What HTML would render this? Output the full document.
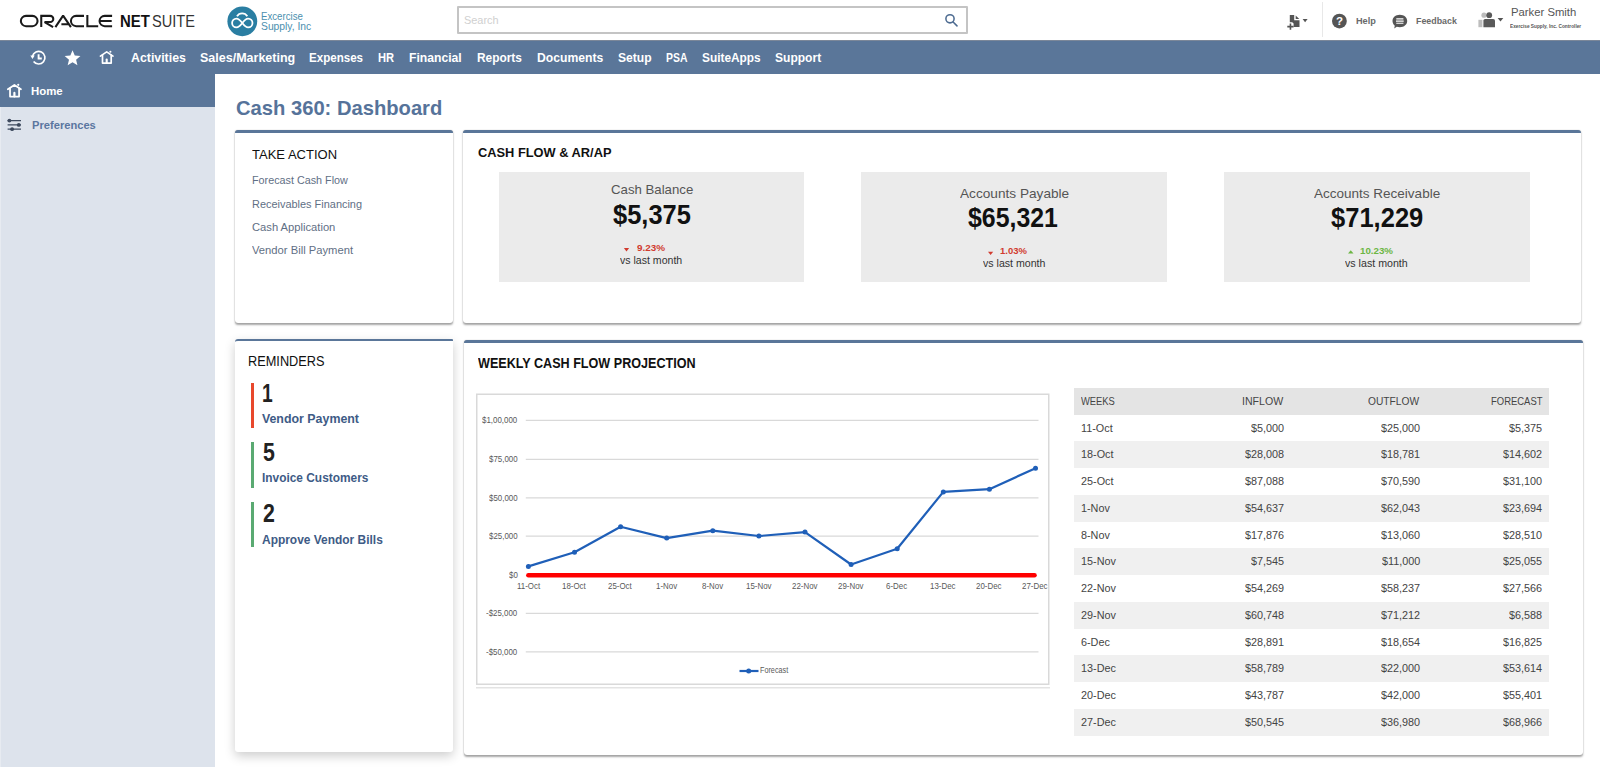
<!DOCTYPE html>
<html><head><meta charset="utf-8"><title>Cash 360: Dashboard</title><style>
*{margin:0;padding:0;box-sizing:border-box}
html,body{width:1600px;height:767px;overflow:hidden;background:#fff;font-family:"Liberation Sans",sans-serif}
.abs{position:absolute}
.t{position:absolute;white-space:nowrap;line-height:1;transform-origin:0 0}
.card{position:absolute;background:#fff;border-top:3px solid #5a7699;border-radius:3px 3px 3px 3px}
</style></head><body>
<div class="abs" style="left:0;top:40px;width:1600px;height:34px;background:#5a7699;border-top:1px solid #7b8799"></div>
<div class="abs" style="left:0;top:74px;width:215px;height:693px;background:#dde3ec"></div>
<div class="abs" style="left:0;top:74px;width:215px;height:33px;background:#5a7699"></div>
<div class="abs" style="left:457px;top:6px;width:511px;height:27.5px;border:2px solid #c4c4c4;border-radius:1px;background:#fff"></div>
<div class="abs" style="left:1321.5px;top:2px;width:1px;height:35px;background:#e8e8e8"></div>
<div class="card" style="left:235px;top:129.5px;width:218px;height:193.2px;box-shadow:0 1.5px 2px rgba(0,0,0,.35),0 0 1px rgba(0,0,0,.25)"></div>
<div class="card" style="left:463.3px;top:129.5px;width:1118px;height:193.2px;box-shadow:0 1.5px 2px rgba(0,0,0,.35),0 0 1px rgba(0,0,0,.25)"></div>
<div class="card" style="left:235px;top:338.7px;width:218px;height:413.1px;border-top-width:2.5px;border-top-right-radius:1px;box-shadow:0 4px 11px rgba(0,0,0,.2)"></div>
<div class="card" style="left:464px;top:340.4px;width:1119px;height:414.2px;box-shadow:0 1.5px 2px rgba(0,0,0,.35),0 0 1px rgba(0,0,0,.25)"></div>
<div class="abs" style="left:498.6px;top:172.2px;width:305.8px;height:110.2px;background:#ebebeb"></div>
<div class="abs" style="left:861.0px;top:172.2px;width:305.8px;height:110.2px;background:#ebebeb"></div>
<div class="abs" style="left:1223.8px;top:172.2px;width:305.8px;height:110.2px;background:#ebebeb"></div>
<div class="abs" style="left:250.7px;top:383.0px;width:3.8px;height:45.4px;background:#e8482c"></div>
<div class="abs" style="left:250.7px;top:442.4px;width:3.8px;height:45.9px;background:#5aaa72"></div>
<div class="abs" style="left:250.7px;top:502.0px;width:3.8px;height:45.1px;background:#5aaa72"></div>
<div class="abs" style="left:0;top:107px;width:1px;height:660px;background:#e7ebf1"></div>
<div class="abs" style="left:1074.2px;top:388.2px;width:475px;height:26.4px;background:#e4e4e4"></div>
<div class="abs" style="left:1074.2px;top:441.36px;width:475px;height:26.76px;background:#f0f0f0"></div>
<div class="abs" style="left:1074.2px;top:494.88px;width:475px;height:26.76px;background:#f0f0f0"></div>
<div class="abs" style="left:1074.2px;top:548.40px;width:475px;height:26.76px;background:#f0f0f0"></div>
<div class="abs" style="left:1074.2px;top:601.92px;width:475px;height:26.76px;background:#f0f0f0"></div>
<div class="abs" style="left:1074.2px;top:655.44px;width:475px;height:26.76px;background:#f0f0f0"></div>
<div class="abs" style="left:1074.2px;top:708.96px;width:475px;height:26.76px;background:#f0f0f0"></div>
<svg class="abs" style="left:0;top:0" width="1600" height="767" viewBox="0 0 1600 767">
<rect x="476.75" y="394.25" width="572" height="290" fill="#fff" stroke="#d9d9d9" stroke-width="1.5"/>
<line x1="476" y1="687.75" x2="1050" y2="687.75" stroke="#e3e3e3" stroke-width="1.5"/>
<line x1="525.8" y1="420.3" x2="1038.5" y2="420.3" stroke="#d9d9d9" stroke-width="1.2"/>
<line x1="525.8" y1="459.4" x2="1038.5" y2="459.4" stroke="#d9d9d9" stroke-width="1.2"/>
<line x1="525.8" y1="497.8" x2="1038.5" y2="497.8" stroke="#d9d9d9" stroke-width="1.2"/>
<line x1="525.8" y1="536.1" x2="1038.5" y2="536.1" stroke="#d9d9d9" stroke-width="1.2"/>
<line x1="525.8" y1="613.3" x2="1038.5" y2="613.3" stroke="#d9d9d9" stroke-width="1.2"/>
<line x1="525.8" y1="651.9" x2="1038.5" y2="651.9" stroke="#d9d9d9" stroke-width="1.2"/>
<line x1="528.4" y1="575.3" x2="1034.5" y2="575.3" stroke="#ff0000" stroke-width="4.6" stroke-linecap="round"/>
<polyline points="528.4,566.4 574.5,552.2 620.6,526.7 666.7,538.1 712.8,530.7 758.9,536.0 805.0,532.1 851.1,564.5 897.2,548.7 943.3,491.9 989.4,489.2 1035.5,468.2" fill="none" stroke="#1f5fb8" stroke-width="2.2" stroke-linejoin="round"/>
<circle cx="528.4" cy="566.4" r="2.5" fill="#1f5fb8"/>
<circle cx="574.5" cy="552.2" r="2.5" fill="#1f5fb8"/>
<circle cx="620.6" cy="526.7" r="2.5" fill="#1f5fb8"/>
<circle cx="666.7" cy="538.1" r="2.5" fill="#1f5fb8"/>
<circle cx="712.8" cy="530.7" r="2.5" fill="#1f5fb8"/>
<circle cx="758.9" cy="536.0" r="2.5" fill="#1f5fb8"/>
<circle cx="805.0" cy="532.1" r="2.5" fill="#1f5fb8"/>
<circle cx="851.1" cy="564.5" r="2.5" fill="#1f5fb8"/>
<circle cx="897.2" cy="548.7" r="2.5" fill="#1f5fb8"/>
<circle cx="943.3" cy="491.9" r="2.5" fill="#1f5fb8"/>
<circle cx="989.4" cy="489.2" r="2.5" fill="#1f5fb8"/>
<circle cx="1035.5" cy="468.2" r="2.5" fill="#1f5fb8"/>
<line x1="739.5" y1="671" x2="758.5" y2="671" stroke="#1f5fb8" stroke-width="2.2"/>
<circle cx="748.7" cy="671" r="2.5" fill="#1f5fb8"/>
</svg>

<svg class="abs" style="left:0;top:0" width="1600" height="140" viewBox="0 0 1600 140">
 <g fill="none" stroke="#1a1a1a" stroke-width="2.05" stroke-miterlimit="1.5">
  <rect x="20.85" y="15.85" width="16.7" height="10.3" rx="5.15"/>
  <path d="M41.25,27.1 V15.85 H50.2 A3.1,3.1 0 0 1 50.2,22.05 H44.6 L53.1,27.1"/>
  <path d="M55.4,27.1 L63.1,15.6 L70.9,27.1 M61.4,24.3 H68.4"/>
  <path d="M84,15.85 H76.1 A5.15,5.15 0 0 0 76.1,26.15 H84"/>
  <path d="M87.35,15 V26.15 H98.2"/>
  <path d="M112.1,15.85 H104.7 A5.15,5.15 0 0 0 104.7,26.15 H112.1 M100.3,20.9 H111.7"/>
 </g>
 <!-- company logo -->
 <circle cx="242.3" cy="21.3" r="14.9" fill="#2a7ea2"/>
 <g fill="none" stroke="#fff" stroke-width="1.8">
  <path d="M242.3,23 C244.3,20.3 245.9,18.6 248.1,18.6 C250.6,18.6 252.5,20.6 252.5,23 C252.5,25.4 250.6,27.4 248.1,27.4 C245.9,27.4 244.3,25.7 242.3,23 C240.3,20.3 238.7,18.6 236.5,18.6 C234,18.6 232.1,20.6 232.1,23 C232.1,25.4 234,27.4 236.5,27.4 C238.7,27.4 240.3,25.7 242.3,23 Z"/>
  <path d="M237,16.2 A6,6 0 0 1 247.3,16.2"/>
 </g>
 <!-- search icon -->
 <g fill="none" stroke="#4d6b91" stroke-width="1.55">
  <circle cx="950" cy="18.8" r="4.1"/>
  <path d="M953.1,22 L957,25.9" stroke-linecap="round"/>
 </g>
 <!-- new record icon -->
 <g fill="#555">
  <path d="M1289.8,15 H1294.2 V20.3 H1299.5 V27.1 H1293.6 V23.4 L1292.2,22.2 H1289.8 Z"/>
  <path d="M1295.7,15.5 L1299.3,18.9 H1295.7 Z"/>
  <path d="M1302.6,19 H1307.6 L1305.1,22.2 Z"/>
 </g>
 <path d="M1287.3,26.6 H1293.6 M1290.45,23.4 V29.8" stroke="#555" stroke-width="1.6"/>
 <!-- help -->
 <circle cx="1339.4" cy="21.1" r="7.4" fill="#555"/>
 <text x="1339.4" y="25.3" font-family="Liberation Sans" font-weight="700" font-size="11.5" fill="#fff" text-anchor="middle">?</text>
 <!-- feedback -->
 <path d="M1399.8,14.8 C1404.2,14.8 1407.2,17.6 1407.2,21 C1407.2,24.4 1404.2,27.2 1399.8,27.2 C1398.8,27.2 1397.6,27 1396.8,26.7 L1394.2,28.6 L1394.8,25.7 C1393.3,24.5 1392.5,22.9 1392.5,21 C1392.5,17.6 1395.5,14.8 1399.8,14.8 Z" fill="#555"/>
 <g stroke="#fff" stroke-width="1.1"><path d="M1396.3,18.9 H1403.4 M1396,21.1 H1403.7 M1396.3,23.3 H1403.4"/></g>
 <!-- person -->
 <circle cx="1484" cy="15.2" r="2.6" fill="#bdbdbd"/>
 <rect x="1478.4" y="19.8" width="4" height="7.4" fill="#bdbdbd"/>
 <circle cx="1489.2" cy="15.2" r="2.9" fill="#5a5a5a"/>
 <path d="M1483.4,27.2 V20.6 Q1483.4,18.9 1485.2,18.9 H1493.2 Q1495,18.9 1495,20.6 V27.2 Z" fill="#5a5a5a"/>
 <path d="M1497.6,17.9 H1503.3 L1500.45,21.6 Z" fill="#555"/>
 <!-- nav history icon -->
 <g fill="none" stroke="#fff" stroke-width="1.7">
  <path d="M33.6,61.5 A6.3,6.3 0 1 0 32.5,56.3"/>
  <path d="M38.6,54.3 V58.5 H41.8" stroke-width="1.9"/>
 </g>
 <path d="M30.3,55.6 L34.7,55.6 L32.5,59.1 Z" fill="#fff"/>
 <!-- star -->
 <path d="M72.55,50.20 L74.75,55.48 L80.44,55.94 L76.10,59.65 L77.43,65.21 L72.55,62.23 L67.67,65.21 L69.00,59.65 L64.66,55.94 L70.35,55.48 Z" fill="#fff"/>
 <!-- nav home -->
 <g fill="none" stroke="#fff" stroke-width="1.7" stroke-linejoin="round" stroke-linecap="round">
  <path d="M100.4,56.1 L106.7,51.9 L113,56.1"/>
  <path d="M102.5,55.2 V63.1 H111.2 V55.2"/>
  <path d="M106.7,59.5 V63" stroke-width="2.1"/>
 </g>
 <circle cx="110.4" cy="51.8" r="1.05" fill="#fff"/>
 <!-- sidebar home -->
 <g transform="translate(-92.3,33.3) translate(106.7,57.5) scale(1.04) translate(-106.7,-57.5)"><g fill="none" stroke="#fff" stroke-width="1.7" stroke-linejoin="round" stroke-linecap="round">
  <path d="M100.4,56.1 L106.7,51.9 L113,56.1"/>
  <path d="M102.5,55.2 V63.1 H111.2 V55.2"/>
  <path d="M106.7,59.5 V63" stroke-width="2.1"/>
 </g>
 <circle cx="110.4" cy="51.8" r="1.05" fill="#fff"/></g>
 <!-- preferences -->
 <g stroke="#3d4a5e" stroke-width="1.2"><path d="M7.6,120.6 H21 M7.6,124.9 H21 M7.6,129.2 H21"/></g>
 <g fill="#3d4a5e"><circle cx="9.4" cy="120.6" r="1.9"/><circle cx="18.8" cy="124.9" r="1.9"/><circle cx="12.1" cy="129.2" r="1.9"/></g>
</svg>
<svg class="abs" style="left:0;top:0" width="1600" height="300" viewBox="0 0 1600 300">
 <path d="M623.9,248 H629.1 L626.5,251.4 Z" fill="#d13b2f"/>
 <path d="M988,251.7 H993.2 L990.6,255.1 Z" fill="#d13b2f"/>
 <path d="M1348,253.6 H1353.5 L1350.75,250.2 Z" fill="#6cb644"/>
</svg>

<div class="t" style="left:120.09px;top:13.21px;font-size:16.40px;font-weight:700;color:#111;transform:scaleX(0.9097);">NET</div>
<div class="t" style="left:151.70px;top:13.21px;font-size:16.40px;font-weight:400;color:#333;transform:scaleX(0.8896);">SUITE</div>
<div class="t" style="left:463.80px;top:14.56px;font-size:11.50px;font-weight:400;color:#d0d0d0;transform:scaleX(0.9489);">Search</div>
<div class="t" style="left:1356.00px;top:16.47px;font-size:9.60px;font-weight:700;color:#6a6a6a;transform:scaleX(0.9556);">Help</div>
<div class="t" style="left:1416.00px;top:16.47px;font-size:9.60px;font-weight:700;color:#6a6a6a;transform:scaleX(0.9238);">Feedback</div>
<div class="t" style="left:1510.60px;top:6.71px;font-size:11.80px;font-weight:400;color:#555;transform:scaleX(0.9569);">Parker Smith</div>
<div class="t" style="left:1510.00px;top:23.59px;font-size:5.80px;font-weight:700;color:#555;transform:scaleX(0.8195);">Exercise Supply, Inc. Controller</div>
<div class="t" style="left:261.00px;top:10.81px;font-size:10.50px;font-weight:400;color:#4b8fae;transform:scaleX(0.9196);">Excercise</div>
<div class="t" style="left:261.00px;top:20.51px;font-size:10.50px;font-weight:400;color:#4b8fae;transform:scaleX(0.9820);">Supply, Inc</div>
<div class="t" style="left:130.60px;top:50.67px;font-size:13.50px;font-weight:700;color:#fff;transform:scaleX(0.9140);">Activities</div>
<div class="t" style="left:199.70px;top:50.67px;font-size:13.50px;font-weight:700;color:#fff;transform:scaleX(0.9264);">Sales/Marketing</div>
<div class="t" style="left:309.40px;top:50.67px;font-size:13.50px;font-weight:700;color:#fff;transform:scaleX(0.8572);">Expenses</div>
<div class="t" style="left:377.70px;top:50.67px;font-size:13.50px;font-weight:700;color:#fff;transform:scaleX(0.8253);">HR</div>
<div class="t" style="left:409.20px;top:50.67px;font-size:13.50px;font-weight:700;color:#fff;transform:scaleX(0.9002);">Financial</div>
<div class="t" style="left:476.80px;top:50.67px;font-size:13.50px;font-weight:700;color:#fff;transform:scaleX(0.8812);">Reports</div>
<div class="t" style="left:536.60px;top:50.67px;font-size:13.50px;font-weight:700;color:#fff;transform:scaleX(0.9013);">Documents</div>
<div class="t" style="left:617.60px;top:50.67px;font-size:13.50px;font-weight:700;color:#fff;transform:scaleX(0.8965);">Setup</div>
<div class="t" style="left:666.00px;top:50.67px;font-size:13.50px;font-weight:700;color:#fff;transform:scaleX(0.7712);">PSA</div>
<div class="t" style="left:702.40px;top:50.67px;font-size:13.50px;font-weight:700;color:#fff;transform:scaleX(0.8785);">SuiteApps</div>
<div class="t" style="left:775.00px;top:50.67px;font-size:13.50px;font-weight:700;color:#fff;transform:scaleX(0.8920);">Support</div>
<div class="t" style="left:31.30px;top:86.46px;font-size:11.50px;font-weight:700;color:#fff;transform:scaleX(0.9919);">Home</div>
<div class="t" style="left:31.70px;top:119.72px;font-size:11.20px;font-weight:700;color:#5a76a0;transform:scaleX(0.9963);">Preferences</div>
<div class="t" style="left:235.80px;top:96.82px;font-size:21.00px;font-weight:700;color:#56739a;transform:scaleX(0.9607);">Cash 360: Dashboard</div>
<div class="t" style="left:251.70px;top:148.08px;font-size:13.60px;font-weight:400;color:#111;transform:scaleX(0.9571);">TAKE ACTION</div>
<div class="t" style="left:251.70px;top:175.01px;font-size:11.80px;font-weight:400;color:#5f6f85;transform:scaleX(0.9139);">Forecast Cash Flow</div>
<div class="t" style="left:251.70px;top:198.51px;font-size:11.80px;font-weight:400;color:#5f6f85;transform:scaleX(0.9270);">Receivables Financing</div>
<div class="t" style="left:251.70px;top:221.51px;font-size:11.80px;font-weight:400;color:#5f6f85;transform:scaleX(0.9481);">Cash Application</div>
<div class="t" style="left:251.70px;top:245.01px;font-size:11.80px;font-weight:400;color:#5f6f85;transform:scaleX(0.9509);">Vendor Bill Payment</div>
<div class="t" style="left:477.70px;top:145.85px;font-size:13.40px;font-weight:700;color:#111;transform:scaleX(0.9577);">CASH FLOW &amp; AR/AP</div>
<div class="t" style="left:610.60px;top:183.28px;font-size:13.60px;font-weight:400;color:#555;transform:scaleX(0.9717);">Cash Balance</div>
<div class="t" style="left:612.80px;top:201.22px;font-size:27.50px;font-weight:700;color:#111;transform:scaleX(0.9258);">$5,375</div>
<div class="t" style="left:636.90px;top:242.56px;font-size:9.50px;font-weight:700;color:#d13b2f;transform:scaleX(1.0440);">9.23%</div>
<div class="t" style="left:620.20px;top:254.99px;font-size:11.00px;font-weight:400;color:#333;transform:scaleX(0.9600);">vs last month</div>
<div class="t" style="left:959.60px;top:186.68px;font-size:13.60px;font-weight:400;color:#555;transform:scaleX(1.0032);">Accounts Payable</div>
<div class="t" style="left:968.20px;top:204.22px;font-size:27.50px;font-weight:700;color:#111;transform:scaleX(0.9040);">$65,321</div>
<div class="t" style="left:1000.40px;top:245.96px;font-size:9.50px;font-weight:700;color:#d13b2f;transform:scaleX(0.9967);">1.03%</div>
<div class="t" style="left:982.80px;top:257.99px;font-size:11.00px;font-weight:400;color:#333;transform:scaleX(0.9631);">vs last month</div>
<div class="t" style="left:1313.70px;top:186.68px;font-size:13.60px;font-weight:400;color:#555;transform:scaleX(0.9938);">Accounts Receivable</div>
<div class="t" style="left:1330.60px;top:204.32px;font-size:27.50px;font-weight:700;color:#111;transform:scaleX(0.9282);">$71,229</div>
<div class="t" style="left:1360.00px;top:245.96px;font-size:9.50px;font-weight:700;color:#6cb644;transform:scaleX(1.0252);">10.23%</div>
<div class="t" style="left:1345.00px;top:257.99px;font-size:11.00px;font-weight:400;color:#333;transform:scaleX(0.9678);">vs last month</div>
<div class="t" style="left:248.00px;top:354.48px;font-size:14.20px;font-weight:400;color:#111;transform:scaleX(0.8988);">REMINDERS</div>
<div class="t" style="left:262.05px;top:380.81px;font-size:25.50px;font-weight:700;color:#222;transform:scaleX(0.7538);">1</div>
<div class="t" style="left:261.90px;top:413.40px;font-size:12.40px;font-weight:700;color:#3e5b86;">Vendor Payment</div>
<div class="t" style="left:262.80px;top:440.31px;font-size:25.50px;font-weight:700;color:#222;transform:scaleX(0.8357);">5</div>
<div class="t" style="left:261.90px;top:472.10px;font-size:12.40px;font-weight:700;color:#3e5b86;transform:scaleX(0.9597);">Invoice Customers</div>
<div class="t" style="left:262.80px;top:500.81px;font-size:25.50px;font-weight:700;color:#222;transform:scaleX(0.8357);">2</div>
<div class="t" style="left:261.90px;top:533.70px;font-size:12.40px;font-weight:700;color:#3e5b86;transform:scaleX(0.9640);">Approve Vendor Bills</div>
<div class="t" style="left:478.30px;top:356.08px;font-size:14.20px;font-weight:700;color:#111;transform:scaleX(0.8876);">WEEKLY CASH FLOW PROJECTION</div>
<div class="t" style="left:482.32px;top:416.22px;font-size:8.60px;font-weight:400;color:#595959;transform:scaleX(0.9200);">$1,00,000</div>
<div class="t" style="left:488.92px;top:455.32px;font-size:8.60px;font-weight:400;color:#595959;transform:scaleX(0.9200);">$75,000</div>
<div class="t" style="left:488.92px;top:493.72px;font-size:8.60px;font-weight:400;color:#595959;transform:scaleX(0.9200);">$50,000</div>
<div class="t" style="left:488.92px;top:532.02px;font-size:8.60px;font-weight:400;color:#595959;transform:scaleX(0.9200);">$25,000</div>
<div class="t" style="left:508.70px;top:570.62px;font-size:8.60px;font-weight:400;color:#595959;transform:scaleX(0.9200);">$0</div>
<div class="t" style="left:486.29px;top:609.22px;font-size:8.60px;font-weight:400;color:#595959;transform:scaleX(0.9200);">-$25,000</div>
<div class="t" style="left:486.29px;top:647.82px;font-size:8.60px;font-weight:400;color:#595959;transform:scaleX(0.9200);">-$50,000</div>
<div class="t" style="left:516.55px;top:582.02px;font-size:8.60px;font-weight:400;color:#595959;transform:scaleX(0.9200);">11-Oct</div>
<div class="t" style="left:562.36px;top:582.02px;font-size:8.60px;font-weight:400;color:#595959;transform:scaleX(0.9200);">18-Oct</div>
<div class="t" style="left:608.46px;top:582.02px;font-size:8.60px;font-weight:400;color:#595959;transform:scaleX(0.9200);">25-Oct</div>
<div class="t" style="left:655.83px;top:582.02px;font-size:8.60px;font-weight:400;color:#595959;transform:scaleX(0.9200);">1-Nov</div>
<div class="t" style="left:701.93px;top:582.02px;font-size:8.60px;font-weight:400;color:#595959;transform:scaleX(0.9200);">8-Nov</div>
<div class="t" style="left:745.83px;top:582.02px;font-size:8.60px;font-weight:400;color:#595959;transform:scaleX(0.9200);">15-Nov</div>
<div class="t" style="left:791.93px;top:582.02px;font-size:8.60px;font-weight:400;color:#595959;transform:scaleX(0.9200);">22-Nov</div>
<div class="t" style="left:838.03px;top:582.02px;font-size:8.60px;font-weight:400;color:#595959;transform:scaleX(0.9200);">29-Nov</div>
<div class="t" style="left:886.33px;top:582.02px;font-size:8.60px;font-weight:400;color:#595959;transform:scaleX(0.9200);">6-Dec</div>
<div class="t" style="left:930.23px;top:582.02px;font-size:8.60px;font-weight:400;color:#595959;transform:scaleX(0.9200);">13-Dec</div>
<div class="t" style="left:976.33px;top:582.02px;font-size:8.60px;font-weight:400;color:#595959;transform:scaleX(0.9200);">20-Dec</div>
<div class="t" style="left:1022.43px;top:582.02px;font-size:8.60px;font-weight:400;color:#595959;transform:scaleX(0.9200);">27-Dec</div>
<div class="t" style="left:760.20px;top:666.32px;font-size:8.60px;font-weight:400;color:#595959;transform:scaleX(0.8430);">Forecast</div>
<div class="t" style="left:1080.80px;top:395.75px;font-size:11.40px;font-weight:400;color:#444;transform:scaleX(0.8232);">WEEKS</div>
<div class="t" style="left:1241.87px;top:395.75px;font-size:11.40px;font-weight:400;color:#444;transform:scaleX(0.9301);">INFLOW</div>
<div class="t" style="left:1368.20px;top:395.75px;font-size:11.40px;font-weight:400;color:#444;transform:scaleX(0.8969);">OUTFLOW</div>
<div class="t" style="left:1490.60px;top:395.75px;font-size:11.40px;font-weight:400;color:#444;transform:scaleX(0.8298);">FORECAST</div>
<div class="t" style="left:1080.80px;top:422.65px;font-size:11.40px;font-weight:400;color:#444;transform:scaleX(0.9500);">11-Oct</div>
<div class="t" style="left:1250.52px;top:422.65px;font-size:11.40px;font-weight:400;color:#444;transform:scaleX(0.9500);">$5,000</div>
<div class="t" style="left:1380.70px;top:422.65px;font-size:11.40px;font-weight:400;color:#444;transform:scaleX(0.9500);">$25,000</div>
<div class="t" style="left:1509.32px;top:422.65px;font-size:11.40px;font-weight:400;color:#444;transform:scaleX(0.9500);">$5,375</div>
<div class="t" style="left:1080.80px;top:449.41px;font-size:11.40px;font-weight:400;color:#444;transform:scaleX(0.9500);">18-Oct</div>
<div class="t" style="left:1244.50px;top:449.41px;font-size:11.40px;font-weight:400;color:#444;transform:scaleX(0.9500);">$28,008</div>
<div class="t" style="left:1380.70px;top:449.41px;font-size:11.40px;font-weight:400;color:#444;transform:scaleX(0.9500);">$18,781</div>
<div class="t" style="left:1503.30px;top:449.41px;font-size:11.40px;font-weight:400;color:#444;transform:scaleX(0.9500);">$14,602</div>
<div class="t" style="left:1080.80px;top:476.17px;font-size:11.40px;font-weight:400;color:#444;transform:scaleX(0.9500);">25-Oct</div>
<div class="t" style="left:1244.50px;top:476.17px;font-size:11.40px;font-weight:400;color:#444;transform:scaleX(0.9500);">$87,088</div>
<div class="t" style="left:1380.70px;top:476.17px;font-size:11.40px;font-weight:400;color:#444;transform:scaleX(0.9500);">$70,590</div>
<div class="t" style="left:1503.30px;top:476.17px;font-size:11.40px;font-weight:400;color:#444;transform:scaleX(0.9500);">$31,100</div>
<div class="t" style="left:1080.80px;top:502.93px;font-size:11.40px;font-weight:400;color:#444;transform:scaleX(0.9500);">1-Nov</div>
<div class="t" style="left:1244.50px;top:502.93px;font-size:11.40px;font-weight:400;color:#444;transform:scaleX(0.9500);">$54,637</div>
<div class="t" style="left:1380.70px;top:502.93px;font-size:11.40px;font-weight:400;color:#444;transform:scaleX(0.9500);">$62,043</div>
<div class="t" style="left:1503.30px;top:502.93px;font-size:11.40px;font-weight:400;color:#444;transform:scaleX(0.9500);">$23,694</div>
<div class="t" style="left:1080.80px;top:529.69px;font-size:11.40px;font-weight:400;color:#444;transform:scaleX(0.9500);">8-Nov</div>
<div class="t" style="left:1244.50px;top:529.69px;font-size:11.40px;font-weight:400;color:#444;transform:scaleX(0.9500);">$17,876</div>
<div class="t" style="left:1380.70px;top:529.69px;font-size:11.40px;font-weight:400;color:#444;transform:scaleX(0.9500);">$13,060</div>
<div class="t" style="left:1503.30px;top:529.69px;font-size:11.40px;font-weight:400;color:#444;transform:scaleX(0.9500);">$28,510</div>
<div class="t" style="left:1080.80px;top:556.45px;font-size:11.40px;font-weight:400;color:#444;transform:scaleX(0.9500);">15-Nov</div>
<div class="t" style="left:1250.52px;top:556.45px;font-size:11.40px;font-weight:400;color:#444;transform:scaleX(0.9500);">$7,545</div>
<div class="t" style="left:1381.51px;top:556.45px;font-size:11.40px;font-weight:400;color:#444;transform:scaleX(0.9500);">$11,000</div>
<div class="t" style="left:1503.30px;top:556.45px;font-size:11.40px;font-weight:400;color:#444;transform:scaleX(0.9500);">$25,055</div>
<div class="t" style="left:1080.80px;top:583.21px;font-size:11.40px;font-weight:400;color:#444;transform:scaleX(0.9500);">22-Nov</div>
<div class="t" style="left:1244.50px;top:583.21px;font-size:11.40px;font-weight:400;color:#444;transform:scaleX(0.9500);">$54,269</div>
<div class="t" style="left:1380.70px;top:583.21px;font-size:11.40px;font-weight:400;color:#444;transform:scaleX(0.9500);">$58,237</div>
<div class="t" style="left:1503.30px;top:583.21px;font-size:11.40px;font-weight:400;color:#444;transform:scaleX(0.9500);">$27,566</div>
<div class="t" style="left:1080.80px;top:609.97px;font-size:11.40px;font-weight:400;color:#444;transform:scaleX(0.9500);">29-Nov</div>
<div class="t" style="left:1244.50px;top:609.97px;font-size:11.40px;font-weight:400;color:#444;transform:scaleX(0.9500);">$60,748</div>
<div class="t" style="left:1380.70px;top:609.97px;font-size:11.40px;font-weight:400;color:#444;transform:scaleX(0.9500);">$71,212</div>
<div class="t" style="left:1509.32px;top:609.97px;font-size:11.40px;font-weight:400;color:#444;transform:scaleX(0.9500);">$6,588</div>
<div class="t" style="left:1080.80px;top:636.73px;font-size:11.40px;font-weight:400;color:#444;transform:scaleX(0.9500);">6-Dec</div>
<div class="t" style="left:1244.50px;top:636.73px;font-size:11.40px;font-weight:400;color:#444;transform:scaleX(0.9500);">$28,891</div>
<div class="t" style="left:1380.70px;top:636.73px;font-size:11.40px;font-weight:400;color:#444;transform:scaleX(0.9500);">$18,654</div>
<div class="t" style="left:1503.30px;top:636.73px;font-size:11.40px;font-weight:400;color:#444;transform:scaleX(0.9500);">$16,825</div>
<div class="t" style="left:1080.80px;top:663.49px;font-size:11.40px;font-weight:400;color:#444;transform:scaleX(0.9500);">13-Dec</div>
<div class="t" style="left:1244.50px;top:663.49px;font-size:11.40px;font-weight:400;color:#444;transform:scaleX(0.9500);">$58,789</div>
<div class="t" style="left:1380.70px;top:663.49px;font-size:11.40px;font-weight:400;color:#444;transform:scaleX(0.9500);">$22,000</div>
<div class="t" style="left:1503.30px;top:663.49px;font-size:11.40px;font-weight:400;color:#444;transform:scaleX(0.9500);">$53,614</div>
<div class="t" style="left:1080.80px;top:690.25px;font-size:11.40px;font-weight:400;color:#444;transform:scaleX(0.9500);">20-Dec</div>
<div class="t" style="left:1244.50px;top:690.25px;font-size:11.40px;font-weight:400;color:#444;transform:scaleX(0.9500);">$43,787</div>
<div class="t" style="left:1380.70px;top:690.25px;font-size:11.40px;font-weight:400;color:#444;transform:scaleX(0.9500);">$42,000</div>
<div class="t" style="left:1503.30px;top:690.25px;font-size:11.40px;font-weight:400;color:#444;transform:scaleX(0.9500);">$55,401</div>
<div class="t" style="left:1080.80px;top:717.01px;font-size:11.40px;font-weight:400;color:#444;transform:scaleX(0.9500);">27-Dec</div>
<div class="t" style="left:1244.50px;top:717.01px;font-size:11.40px;font-weight:400;color:#444;transform:scaleX(0.9500);">$50,545</div>
<div class="t" style="left:1380.70px;top:717.01px;font-size:11.40px;font-weight:400;color:#444;transform:scaleX(0.9500);">$36,980</div>
<div class="t" style="left:1503.30px;top:717.01px;font-size:11.40px;font-weight:400;color:#444;transform:scaleX(0.9500);">$68,966</div>
</body></html>
